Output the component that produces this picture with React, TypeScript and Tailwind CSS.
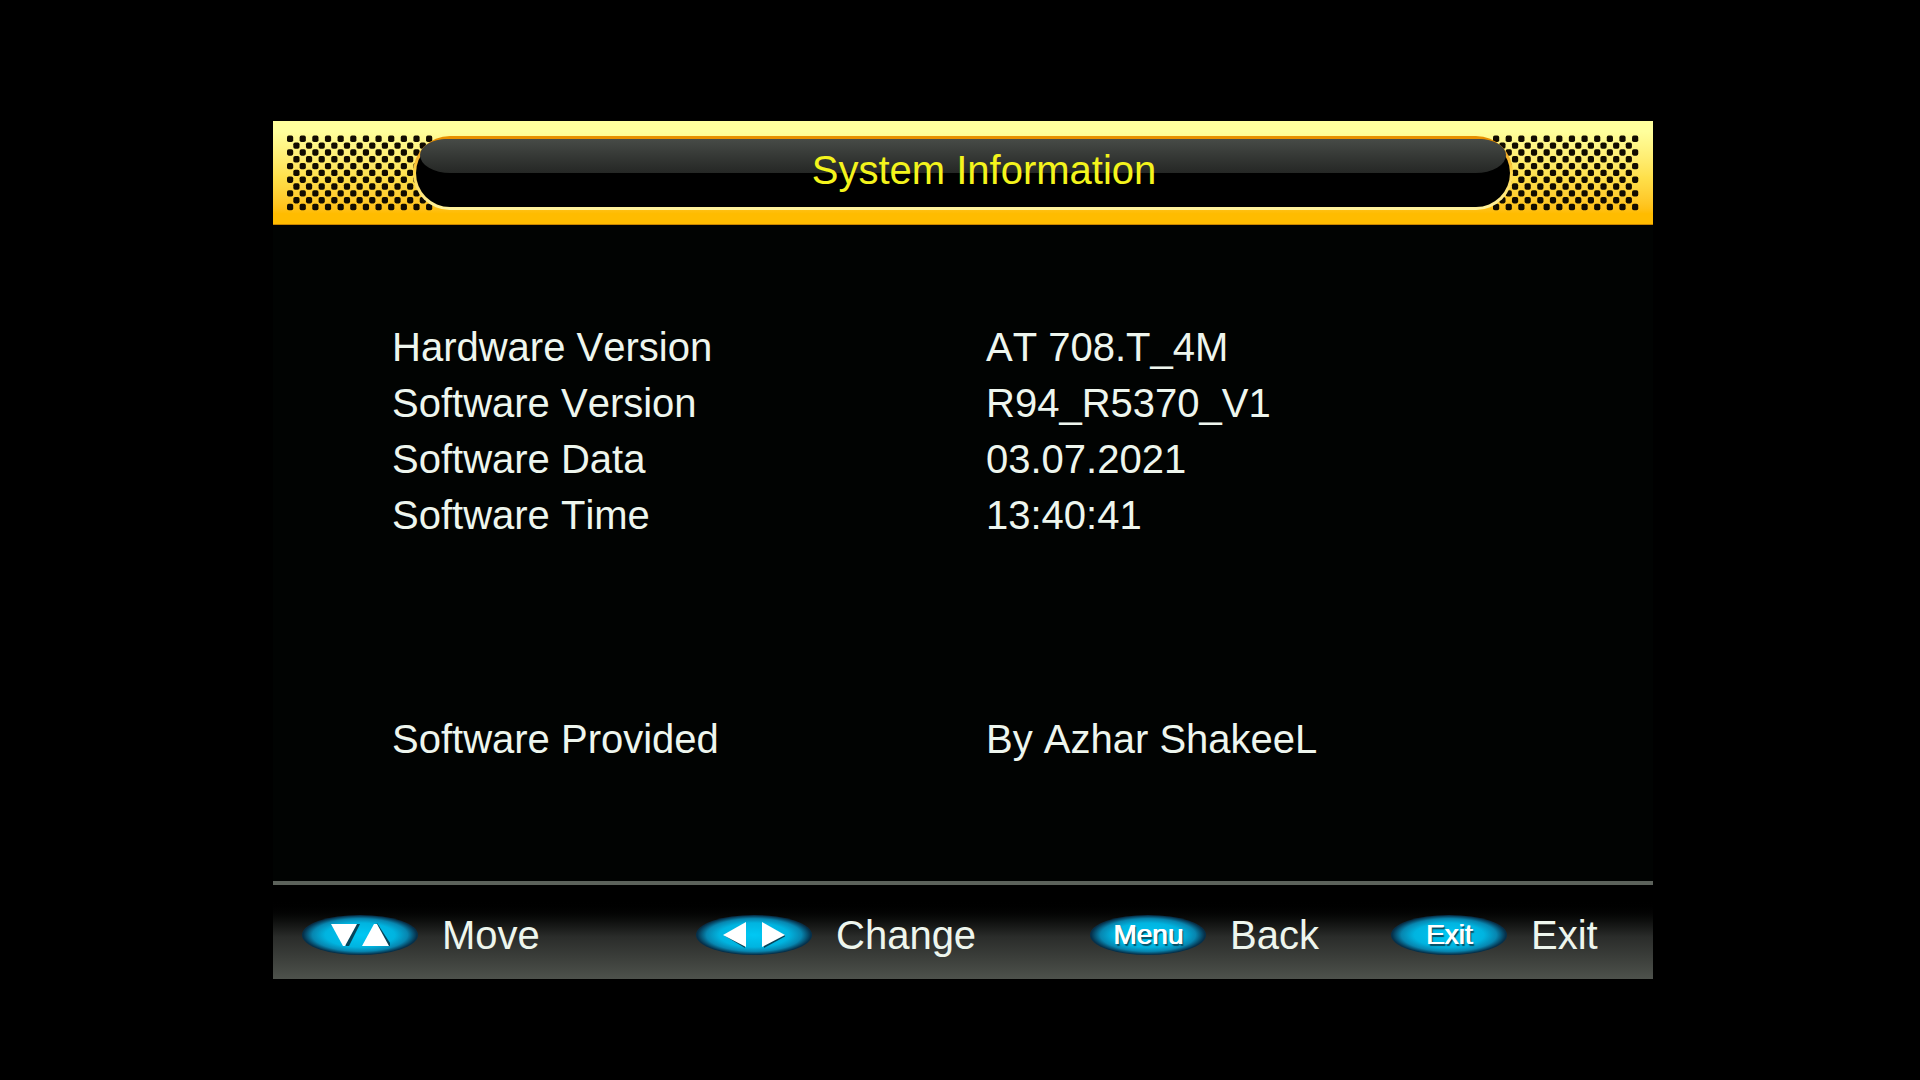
import { ReactNode } from "react";

const info = [
  { label: "Hardware Version", value: "AT 708.T_4M" },
  { label: "Software Version", value: "R94_R5370_V1" },
  { label: "Software Data", value: "03.07.2021" },
  { label: "Software Time", value: "13:40:41" },
];

const provider = { label: "Software Provided", value: "By Azhar ShakeeL" };

const Dots = ({ side }: { side: "left" | "right" }) => {
  const dots = [];
  for (let row = 0; row < 11; row++) {
    const odd = row % 2 === 1;
    for (let col = 0; col < (odd ? 11 : 12); col++) {
      dots.push({ x: col * 12.64 + (odd ? 6.32 : 0), y: row * 6.82 });
    }
  }
  return (
    <svg
      viewBox="0 0 146 76"
      className="h-[76px] w-[146px] flex-shrink-0"
      aria-hidden="true"
    >
      {dots.map((d, i) => (
        <rect
          key={`${side}-${i}`}
          x={d.x}
          y={d.y + 0.6}
          width="6.2"
          height="6.4"
          rx="1.8"
          fill="#120c00"
        />
      ))}
    </svg>
  );
};

const Header = ({ title }: { title: string }) => {
  return (
    <header className="flex items-center border-b border-[#c98500] bg-linear-to-b from-[#ffff9c] from-10% via-[#ffe04a] via-55% to-[#ffbc00] to-90% px-[14px] pt-[14px] pb-[13px]">
      <Dots side="left" />
      <div className="relative -mx-5 h-[74px] flex-1 rounded-full bg-linear-to-b from-[#e89000] from-10% via-[#ffd84a] to-[#fff3a0] p-[3px]">
        <div className="flex h-full items-center justify-center overflow-hidden rounded-full bg-black pl-[42px]">
          <div className="absolute inset-x-[7px] top-[3px] h-[34px] rounded-[30px_30px_34px_34px/18px_18px_20px_20px] bg-linear-to-b from-[#474b47] to-[#252725]" />
          <h1 className="relative pb-[6px] text-[40px] leading-[56px] whitespace-nowrap text-[#f4f41c]">
            {title}
          </h1>
        </div>
      </div>
      <Dots side="right" />
    </header>
  );
};

const InfoRow = ({ label, value }: { label: string; value: string }) => {
  return (
    <tr className="h-14">
      <th scope="row" className="w-[594px] p-0 text-left font-normal">
        {label}
      </th>
      <td className="p-0">{value}</td>
    </tr>
  );
};

const KeyHint = ({ label, children }: { label: string; children: ReactNode }) => {
  return (
    <button type="button" className="flex items-center gap-6 text-left">
      <span className="flex h-10 w-[116px] flex-shrink-0 items-center justify-center rounded-[50%] bg-[radial-gradient(closest-side,#00c8f4_0%,#00b4e0_60%,#0786b0_82%,#06304a_98%)] text-[28px] leading-10 text-white [text-shadow:1px_0_0_#fff,2px_2px_1px_#064a60]">
        {children}
      </span>
      <span>{label}</span>
    </button>
  );
};

const App = () => {
  return (
    <div className="min-h-screen bg-black pt-[121px] pl-[6px] font-['Liberation_Sans',Arial,sans-serif] text-[40px] leading-[56px] text-[#eef6ee] [font-kerning:none]">
      <main className="mx-auto w-full max-w-[1380px] bg-[#010302]">
        <Header title="System Information" />

        <section className="min-h-[656px] pt-[94px] pl-[119px]">
          <table className="w-full border-collapse">
            <tbody>
              {info.map((row) => (
                <InfoRow key={row.label} {...row} />
              ))}
            </tbody>
            <tbody className="before:block before:h-[168px]">
              <InfoRow {...provider} />
            </tbody>
          </table>
        </section>

        <footer className="grid grid-cols-[394fr_394fr_301fr_262fr] border-t-4 border-[#5c625b] bg-linear-to-b from-black from-15% via-[#2a2c2a] via-55% to-[#4e524c] pt-[22px] pb-4 pl-[29px]">
          <KeyHint label="Move">
            <svg viewBox="0 0 60 24" className="h-6 w-[60px]" role="img" aria-label="Down and up">
              <path d="M4 1h26L19 23h-3z" fill="#05455a" />
              <path d="M47 0L62 23H38z" fill="#05455a" />
              <path d="M1 1h26L15 23h-2z" fill="#fff" />
              <path d="M44 1h3l12 22H32z" fill="#fff" />
            </svg>
          </KeyHint>
          <KeyHint label="Change">
            <svg viewBox="0 0 62 26" className="h-[26px] w-[62px]" role="img" aria-label="Left and right">
              <path d="M22 2v24L2 14z" fill="#05455a" />
              <path d="M41 2v24l22-12z" fill="#05455a" />
              <path d="M23 0v25L0 13z" fill="#fff" />
              <path d="M39 0v25l23-12z" fill="#fff" />
            </svg>
          </KeyHint>
          <KeyHint label="Back">Menu</KeyHint>
          <KeyHint label="Exit">Exit</KeyHint>
        </footer>
      </main>
    </div>
  );
};

export default App;
